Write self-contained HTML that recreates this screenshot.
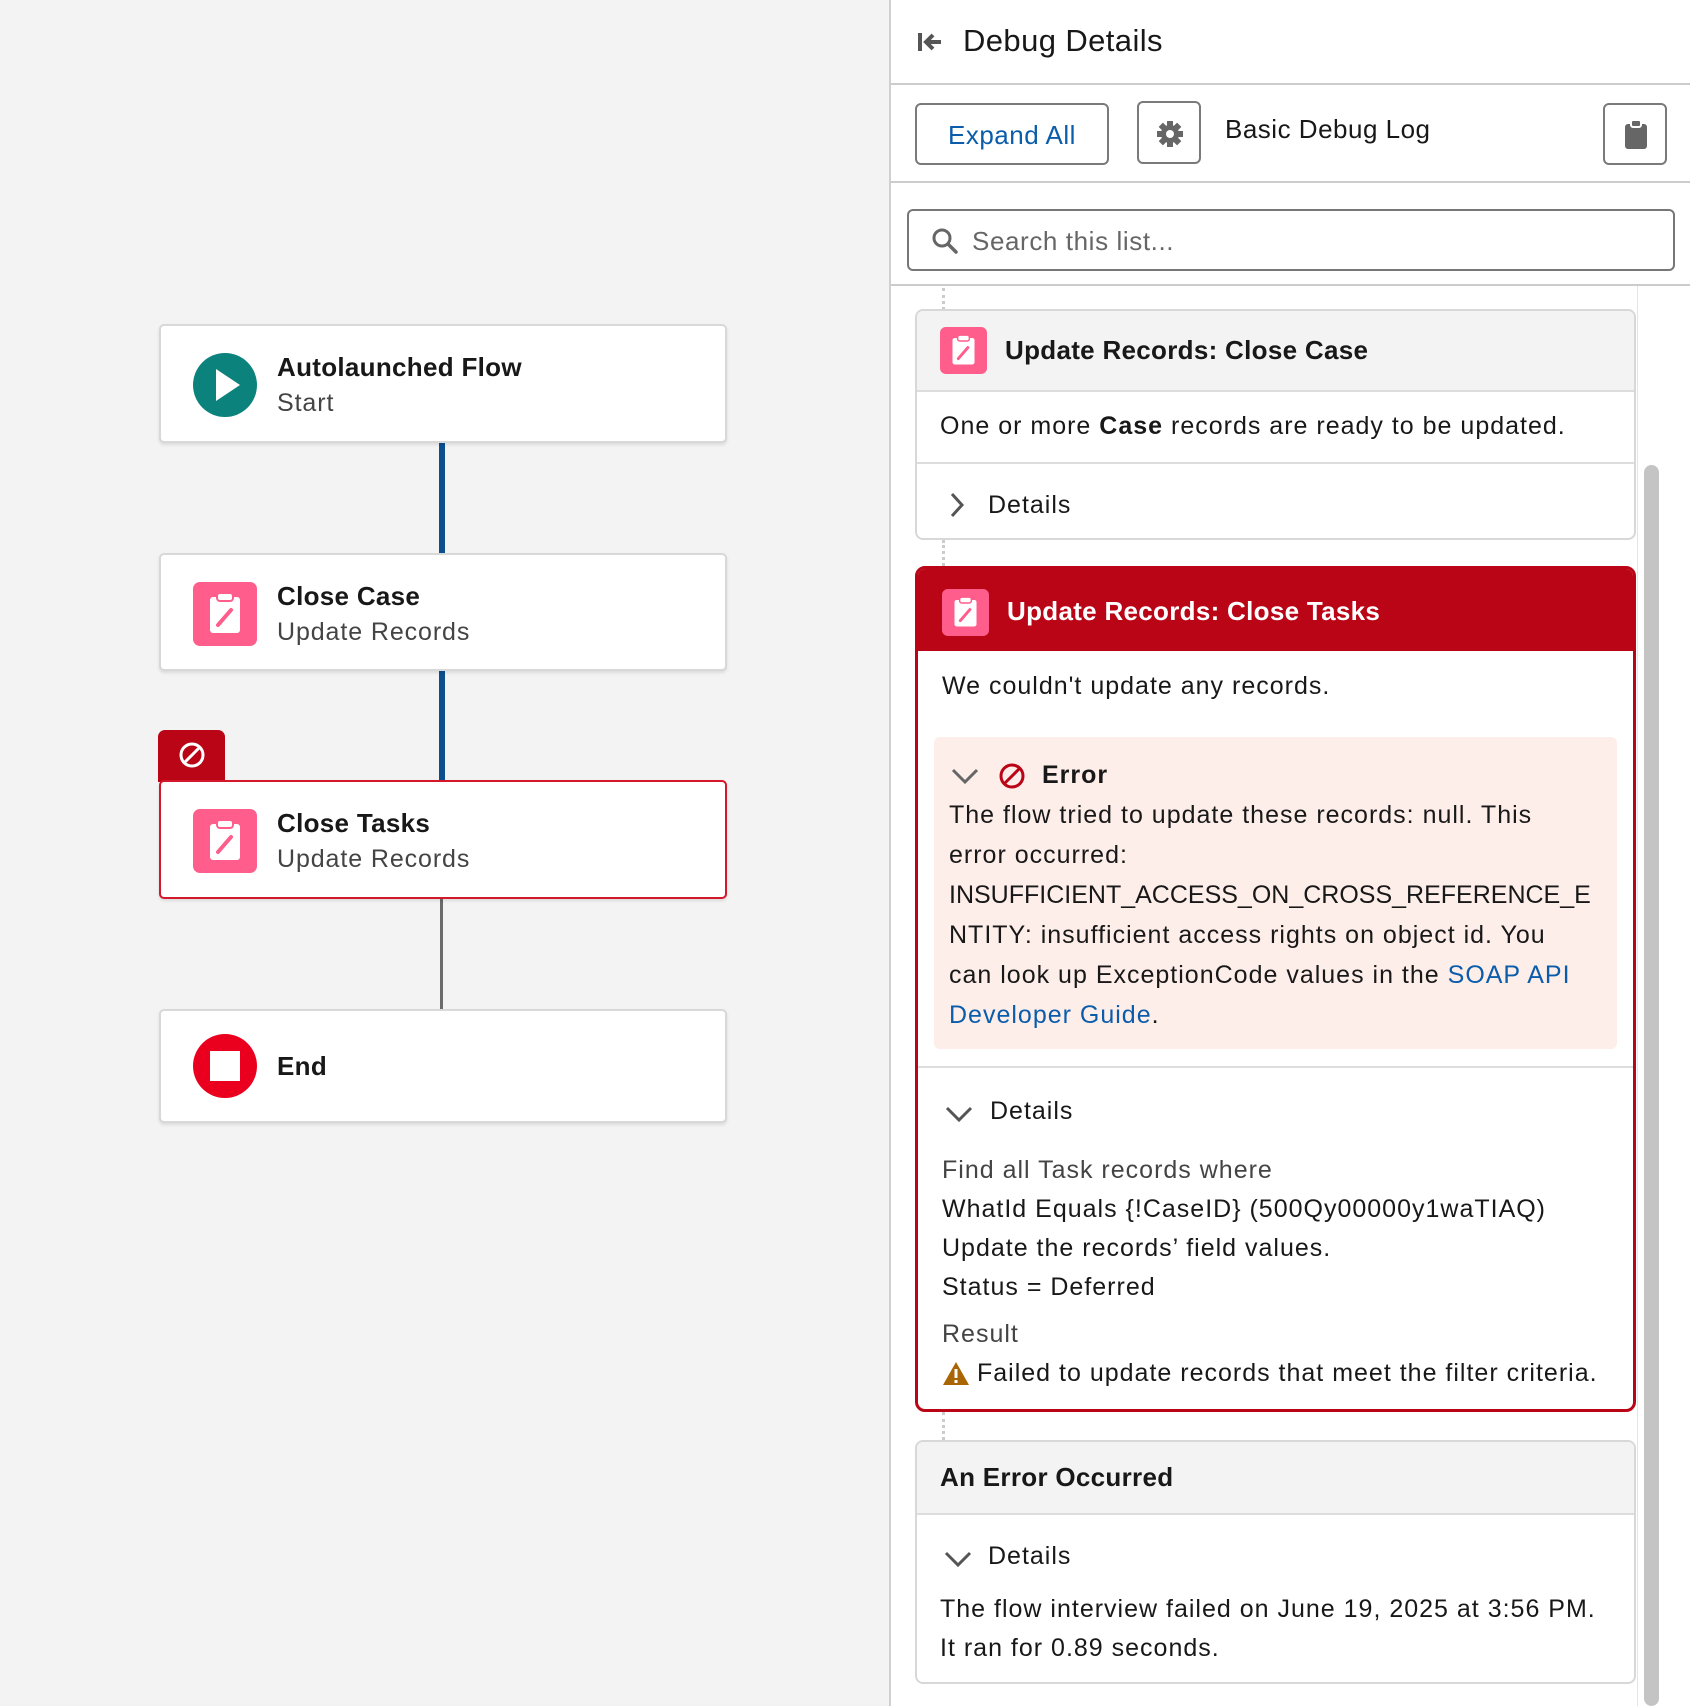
<!DOCTYPE html>
<html><head><meta charset="utf-8"><style>
*{box-sizing:border-box;margin:0;padding:0}
body{width:1690px;height:1706px;overflow:hidden;background:#f3f3f3;font-family:"Liberation Sans",sans-serif;color:#181818;position:relative}
.a{position:absolute}
.card{position:absolute;left:159px;width:568px;background:#fff;border:2px solid #d8d8d8;border-radius:5px;box-shadow:0 2px 3px rgba(0,0,0,.1)}
.t{position:absolute;left:116px;font-size:26px;font-weight:bold;white-space:nowrap;letter-spacing:0.3px}
.s{position:absolute;left:116px;font-size:25px;color:#444;white-space:nowrap;letter-spacing:0.9px}
.ic{position:absolute;left:32px;width:64px;height:64px}
.pc{background:#ff5d8b;border-radius:7px}
.panel{position:absolute;left:889px;top:0;width:801px;height:1706px;background:#fff;border-left:2px solid #d0d0d0}
.btn{position:absolute;border:2px solid #7a7a7a;border-radius:6px;background:#fff}
.txt{font-size:25px;white-space:nowrap;position:absolute;letter-spacing:1px}
.hdr{position:absolute;left:0;right:0;top:0;background:#f3f3f3;border-bottom:2px solid #ddd}
</style></head><body>

<div class="a" style="left:439px;top:443px;width:6px;height:112px;background:#0b4f8f"></div>
<div class="a" style="left:439px;top:671px;width:6px;height:111px;background:#0b4f8f"></div>
<div class="a" style="left:440px;top:899px;width:3px;height:112px;background:#6b6b6b"></div>

<div class="card" style="top:324px;height:119px">
  <svg class="ic" style="top:27px" viewBox="0 0 64 64"><circle cx="32" cy="32" r="32" fill="#0b827c"/><path d="M23 16 L47 32 L23 48Z" fill="#fff"/></svg>
  <div class="t" style="top:26px">Autolaunched Flow</div>
  <div class="s" style="top:63px">Start</div>
</div>
<div class="card" style="top:553px;height:118px">
  <svg class="ic pc" style="top:27px" viewBox="0 0 64 64"><rect x="17" y="15" width="30" height="36" rx="3" fill="#fff"/><rect x="24" y="11" width="16" height="8" rx="3" fill="#fff" stroke="#ff5d8b" stroke-width="2"/><path d="M25 43 L38 28" stroke="#ff5d8b" stroke-width="4" stroke-linecap="round"/></svg>
  <div class="t" style="top:26px">Close Case</div>
  <div class="s" style="top:63px">Update Records</div>
</div>
<div class="a" style="left:158px;top:730px;width:67px;height:52px;background:#ba0517;border-radius:7px 7px 0 0"></div>
<svg class="a" style="left:178px;top:741px" width="28" height="28" viewBox="0 0 28 28"><circle cx="14" cy="14" r="11" fill="none" stroke="#fff" stroke-width="3"/><path d="M7 21 L21 7" stroke="#fff" stroke-width="3"/></svg>
<div class="card" style="top:780px;height:119px;border-color:#d4172a">
  <svg class="ic pc" style="top:27px" viewBox="0 0 64 64"><rect x="17" y="15" width="30" height="36" rx="3" fill="#fff"/><rect x="24" y="11" width="16" height="8" rx="3" fill="#fff" stroke="#ff5d8b" stroke-width="2"/><path d="M25 43 L38 28" stroke="#ff5d8b" stroke-width="4" stroke-linecap="round"/></svg>
  <div class="t" style="top:26px">Close Tasks</div>
  <div class="s" style="top:63px">Update Records</div>
</div>
<div class="card" style="top:1009px;height:114px">
  <svg class="ic" style="top:23px" viewBox="0 0 64 64"><circle cx="32" cy="32" r="32" fill="#ea001e"/><rect x="17" y="17" width="30" height="30" fill="#fff"/></svg>
  <div class="t" style="top:40px">End</div>
</div>

<svg class="a" style="left:892px;top:845px" width="14" height="28"><g fill="#888"><circle cx="3" cy="3" r="2"/><circle cx="10" cy="3" r="2"/><circle cx="3" cy="10" r="2"/><circle cx="10" cy="10" r="2"/><circle cx="3" cy="17" r="2"/><circle cx="10" cy="17" r="2"/><circle cx="3" cy="24" r="2"/><circle cx="10" cy="24" r="2"/></g></svg>

<div class="panel">
  <svg class="a" style="left:26px;top:30px" width="28" height="24" viewBox="0 0 28 24"><rect x="1" y="3" width="4" height="18" fill="#555"/><path d="M24 12 H10 M16 5 L9 12 L16 19" stroke="#555" stroke-width="4" fill="none"/></svg>
  <div class="a" style="left:72px;top:23px;font-size:31px;color:#181818;letter-spacing:0.4px">Debug Details</div>
  <div class="a" style="left:0;right:0;top:83px;height:2px;background:#ccc"></div>
  <div class="btn" style="left:24px;top:103px;width:194px;height:62px"><div class="txt" style="left:31px;top:15px;color:#0b5cab;font-size:26px;letter-spacing:0.5px">Expand All</div></div>
  <div class="btn" style="left:246px;top:101px;width:64px;height:63px">
    <svg class="a" style="left:17px;top:17px" width="28" height="28" viewBox="0 0 28 28"><g fill="#666"><circle cx="14" cy="14" r="9"/><rect x="11" y="1" width="6" height="26"/><rect x="1" y="11" width="26" height="6"/><rect x="11" y="1" width="6" height="26" transform="rotate(45 14 14)"/><rect x="11" y="1" width="6" height="26" transform="rotate(-45 14 14)"/></g><circle cx="14" cy="14" r="4" fill="#fff"/></svg>
  </div>
  <div class="txt" style="left:334px;top:114px;font-size:26px;letter-spacing:0.5px">Basic Debug Log</div>
  <div class="btn" style="left:712px;top:103px;width:64px;height:62px">
    <svg class="a" style="left:18px;top:14px" width="26" height="32" viewBox="0 0 26 32"><rect x="2" y="5" width="22" height="25" rx="3" fill="#666"/><rect x="8" y="1" width="10" height="7" rx="2" fill="#666" stroke="#fff" stroke-width="2"/></svg>
  </div>
  <div class="a" style="left:0;right:0;top:181px;height:2px;background:#ccc"></div>
  <div class="btn" style="left:16px;top:209px;width:768px;height:62px;border-color:#777">
    <svg class="a" style="left:22px;top:16px" width="28" height="28" viewBox="0 0 28 28"><circle cx="11" cy="11" r="8" fill="none" stroke="#666" stroke-width="3"/><path d="M17 17 L25 25" stroke="#666" stroke-width="3.5" stroke-linecap="round"/></svg>
    <div class="txt" style="left:63px;top:15px;color:#666;font-size:26px;letter-spacing:0.6px">Search this list...</div>
  </div>
  <div class="a" style="left:0;right:0;top:284px;height:2px;background:#ccc"></div>
  <div class="a" style="left:746px;top:286px;width:1px;height:1420px;background:#e5e5e5"></div>
  <div class="a" style="left:753px;top:465px;width:15px;height:1241px;background:#c4c4c4;border-radius:8px"></div>
  <div class="a" style="left:51px;top:288px;width:0;height:22px;border-left:3px dotted #ccc"></div>
  <div class="a" style="left:51px;top:540px;width:0;height:26px;border-left:3px dotted #ccc"></div>
  <div class="a" style="left:51px;top:1412px;width:0;height:28px;border-left:3px dotted #ccc"></div>

  <div class="a" style="left:24px;top:309px;width:721px;height:231px;border:2px solid #d8d8d8;border-radius:8px;overflow:hidden;background:#fff">
    <div class="hdr" style="height:81px">
      <svg class="a" style="left:23px;top:16px" width="47" height="47" viewBox="0 0 64 64"><rect width="64" height="64" rx="8" fill="#ff5d8b"/><rect x="17" y="15" width="30" height="36" rx="3" fill="#fff"/><rect x="24" y="11" width="16" height="8" rx="3" fill="#fff" stroke="#ff5d8b" stroke-width="2"/><path d="M25 43 L38 28" stroke="#ff5d8b" stroke-width="4" stroke-linecap="round"/></svg>
      <div class="txt" style="left:88px;top:24px;font-weight:bold;font-size:26px;letter-spacing:0.3px">Update Records: Close Case</div>
    </div>
    <div class="txt" style="left:23px;top:101px">One or more <b>Case</b> records are ready to be updated.</div>
    <div class="a" style="left:0;right:0;top:151px;height:2px;background:#ddd"></div>
    <svg class="a" style="left:32px;top:181px" width="16" height="26"><path d="M3 2 L13 13 L3 24" stroke="#555" stroke-width="3" fill="none"/></svg>
    <div class="txt" style="left:71px;top:180px">Details</div>
  </div>

  <div class="a" style="left:24px;top:566px;width:721px;height:846px;border:3px solid #ba0517;border-radius:10px;overflow:hidden;background:#fff">
    <div class="a" style="left:0;right:0;top:0;height:82px;background:#ba0517"></div>
    <svg class="a" style="left:24px;top:20px" width="47" height="47" viewBox="0 0 64 64"><rect width="64" height="64" rx="8" fill="#ff5d8b"/><rect x="17" y="15" width="30" height="36" rx="3" fill="#fff"/><rect x="24" y="11" width="16" height="8" rx="3" fill="#fff" stroke="#ff5d8b" stroke-width="2"/><path d="M25 43 L38 28" stroke="#ff5d8b" stroke-width="4" stroke-linecap="round"/></svg>
    <div class="txt" style="left:89px;top:27px;font-weight:bold;font-size:26px;color:#fff;letter-spacing:0.3px">Update Records: Close Tasks</div>
    <div class="txt" style="left:24px;top:103px">We couldn't update any records.</div>
    <div class="a" style="left:16px;top:168px;width:683px;height:312px;background:#fdeeea;border-radius:6px"></div>
    <svg class="a" style="left:32px;top:198px" width="30" height="18"><path d="M3 3 L15 15 L27 3" stroke="#666" stroke-width="3" fill="none"/></svg>
    <svg class="a" style="left:80px;top:193px" width="28" height="28" viewBox="0 0 28 28"><circle cx="14" cy="14" r="11" fill="none" stroke="#ba0517" stroke-width="3"/><path d="M7 21 L21 7" stroke="#ba0517" stroke-width="3"/></svg>
    <div class="txt" style="left:124px;top:192px;font-weight:bold">Error</div>
    <div class="a" style="left:31px;top:226px;width:680px;font-size:25px;line-height:40px;letter-spacing:1px;white-space:nowrap">The flow tried to update these records: null. This<br>error occurred:<br><span style="letter-spacing:0">INSUFFICIENT_ACCESS_ON_CROSS_REFERENCE_E</span><br>NTITY: insufficient access rights on object id. You<br>can look up ExceptionCode values in the <span style="color:#0b5cab">SOAP API</span><br><span style="color:#0b5cab">Developer Guide</span>.</div>
    <div class="a" style="left:0;right:0;top:497px;height:2px;background:#ddd"></div>
    <svg class="a" style="left:26px;top:536px" width="30" height="18"><path d="M3 3 L15 15 L27 3" stroke="#555" stroke-width="3" fill="none"/></svg>
    <div class="txt" style="left:72px;top:528px">Details</div>
    <div class="txt" style="left:24px;top:587px;color:#444">Find all Task records where</div>
    <div class="txt" style="left:24px;top:626px">WhatId Equals {!CaseID} (500Qy00000y1waTIAQ)</div>
    <div class="txt" style="left:24px;top:665px">Update the records’ field values.</div>
    <div class="txt" style="left:24px;top:704px">Status = Deferred</div>
    <div class="txt" style="left:24px;top:751px;color:#444">Result</div>
    <svg class="a" style="left:24px;top:792px" width="28" height="25" viewBox="0 0 28 25"><path d="M14 1 L27 24 H1Z" fill="#a96404"/><rect x="12.5" y="8" width="3" height="9" fill="#fff"/><rect x="12.5" y="19" width="3" height="3" fill="#fff"/></svg>
    <div class="txt" style="left:59px;top:790px">Failed to update records that meet the filter criteria.</div>
  </div>

  <div class="a" style="left:24px;top:1440px;width:721px;height:244px;border:2px solid #d8d8d8;border-radius:8px;overflow:hidden;background:#fff">
    <div class="hdr" style="height:73px"></div>
    <div class="txt" style="left:23px;top:20px;font-weight:bold;font-size:26px;letter-spacing:0.3px">An Error Occurred</div>
    <svg class="a" style="left:26px;top:108px" width="30" height="18"><path d="M3 3 L15 15 L27 3" stroke="#555" stroke-width="3" fill="none"/></svg>
    <div class="txt" style="left:71px;top:100px">Details</div>
    <div class="txt" style="left:23px;top:153px">The flow interview failed on June 19, 2025 at 3:56 PM.</div>
    <div class="txt" style="left:23px;top:192px">It ran for 0.89 seconds.</div>
  </div>
</div>
</body></html>
